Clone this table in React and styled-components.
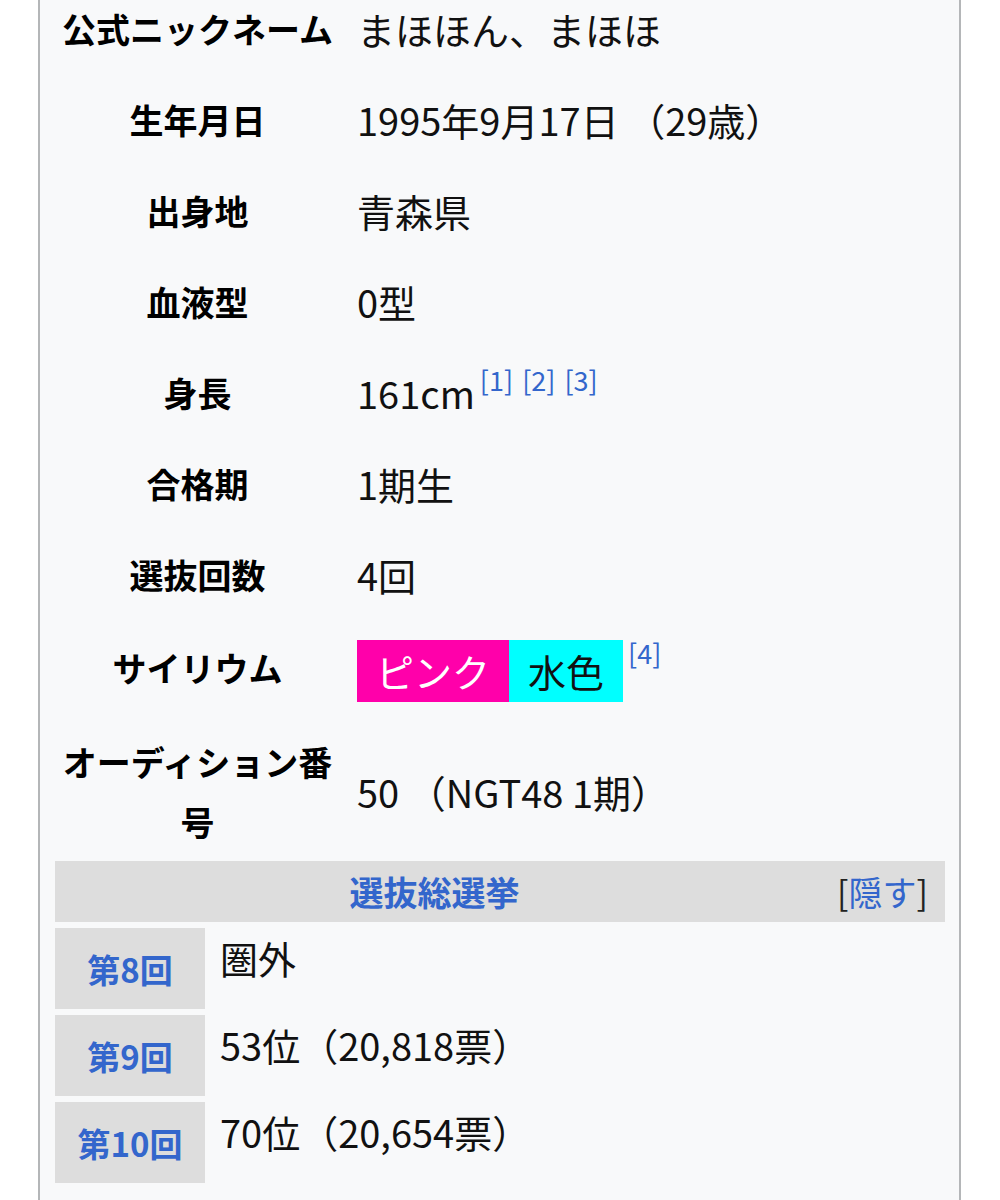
import React from "react";
import styled, { createGlobalStyle } from "styled-components";

const GlobalStyle = createGlobalStyle`
  * {
    box-sizing: border-box;
  }
  body {
    margin: 0;
    background: #ffffff;
    font-family: "Noto Sans CJK JP", "Noto Sans", sans-serif;
    color: #111;
  }
`;

const profile = [
  { label: "公式ニックネーム", value: "まほほん、まほほ" },
  { label: "生年月日", value: "1995年9月17日 （29歳）" },
  { label: "出身地", value: "青森県" },
  { label: "血液型", value: "0型" },
  { label: "身長", value: "161cm", refs: [1, 2, 3] },
  { label: "合格期", value: "1期生" },
  { label: "選抜回数", value: "4回" },
  { label: "サイリウム", colors: true, refs: [4] },
  { label: "オーディション番号", value: "50 （NGT48 1期）" },
];

const elections = [
  { round: "第8回", result: "圏外" },
  { round: "第9回", result: "53位（20,818票）" },
  { round: "第10回", result: "70位（20,654票）" },
];

const App = () => {
  return (
    <Page>
      <GlobalStyle />
      <Panel>
        {profile.map((row, i) => (
          <DataRow key={row.label} last={i === profile.length - 1}>
            <Label>{row.label}</Label>
            <Value>
              {row.colors ? (
                <>
                  <Swatch bg="#ff00aa" fg="#ffffff">ピンク</Swatch>
                  <Swatch bg="#00ffff" fg="#111">水色</Swatch>
                </>
              ) : (
                row.value
              )}
              {row.refs && (
                <Refs>
                  {row.refs.map((r) => (
                    <span key={r}>[{r}]</span>
                  ))}
                </Refs>
              )}
            </Value>
          </DataRow>
        ))}

        <SectionHead>
          <Toggle>
            [<span>隠す</span>]
          </Toggle>
          <SectionTitle>選抜総選挙</SectionTitle>
        </SectionHead>

        <ResultList>
          {elections.map((e) => (
            <ResultRow key={e.round}>
              <RoundCell>{e.round}</RoundCell>
              <ResultCell>{e.result}</ResultCell>
            </ResultRow>
          ))}
        </ResultList>
      </Panel>
    </Page>
  );
};

export default App;

const Page = styled.div`
  padding-left: 38px;
  height: 1200px;
  overflow: hidden;
`;

const Panel = styled.div`
  width: 923px;
  margin-top: -17px;
  min-height: 1300px;
  background: #f8f9fa;
  border-left: 2px solid #b4b6b8;
  border-right: 2px solid #b4b6b8;
  padding: 0 14px 0 15px;
`;

const DataRow = styled.div`
  display: flex;
  align-items: center;
  gap: 17px;
  padding: 15.5px 0 ${(p) => (p.last ? "9px" : "15.5px")};
`;

const Label = styled.div`
  width: 285px;
  flex-shrink: 0;
  text-align: center;
  font-size: 34px;
  font-weight: 700;
  line-height: 60px;
  color: #000;
`;

const Value = styled.div`
  flex: 1;
  font-size: 38px;
  line-height: 60px;
  color: #111;
  white-space: nowrap;
`;

const Swatch = styled.span`
  display: inline-block;
  vertical-align: middle;
  height: 62px;
  line-height: 62px;
  margin: -1px 0;
  padding: 0 19px;
  background: ${(p) => p.bg};
  color: ${(p) => p.fg};
`;

const Refs = styled.sup`
  display: inline-flex;
  gap: 9px;
  margin-left: 5px;
  font-size: 27px;
  line-height: 1;
  vertical-align: 18px;
  color: #3366cc;
`;

const SectionHead = styled.div`
  height: 61px;
  background: #dddddd;
  line-height: 61px;
  padding: 0 17px 0 0;
`;

const Toggle = styled.span`
  float: right;
  margin-left: 23px;
  font-size: 34px;
  color: #222;

  span {
    color: #3366cc;
  }
`;

const SectionTitle = styled.div`
  text-align: center;
  font-size: 34px;
  font-weight: 700;
  color: #3366cc;
`;

const ResultList = styled.div`
  display: flex;
  flex-direction: column;
  gap: 6px;
  padding-top: 6px;
`;

const ResultRow = styled.div`
  display: flex;
  height: 81px;
`;

const RoundCell = styled.div`
  width: 150px;
  display: flex;
  align-items: center;
  justify-content: center;
  background: #dddddd;
  font-size: 33px;
  font-weight: 700;
  color: #3366cc;
`;

const ResultCell = styled.div`
  padding: 0 15px;
  font-size: 38px;
  line-height: 60px;
  color: #111;
`;
